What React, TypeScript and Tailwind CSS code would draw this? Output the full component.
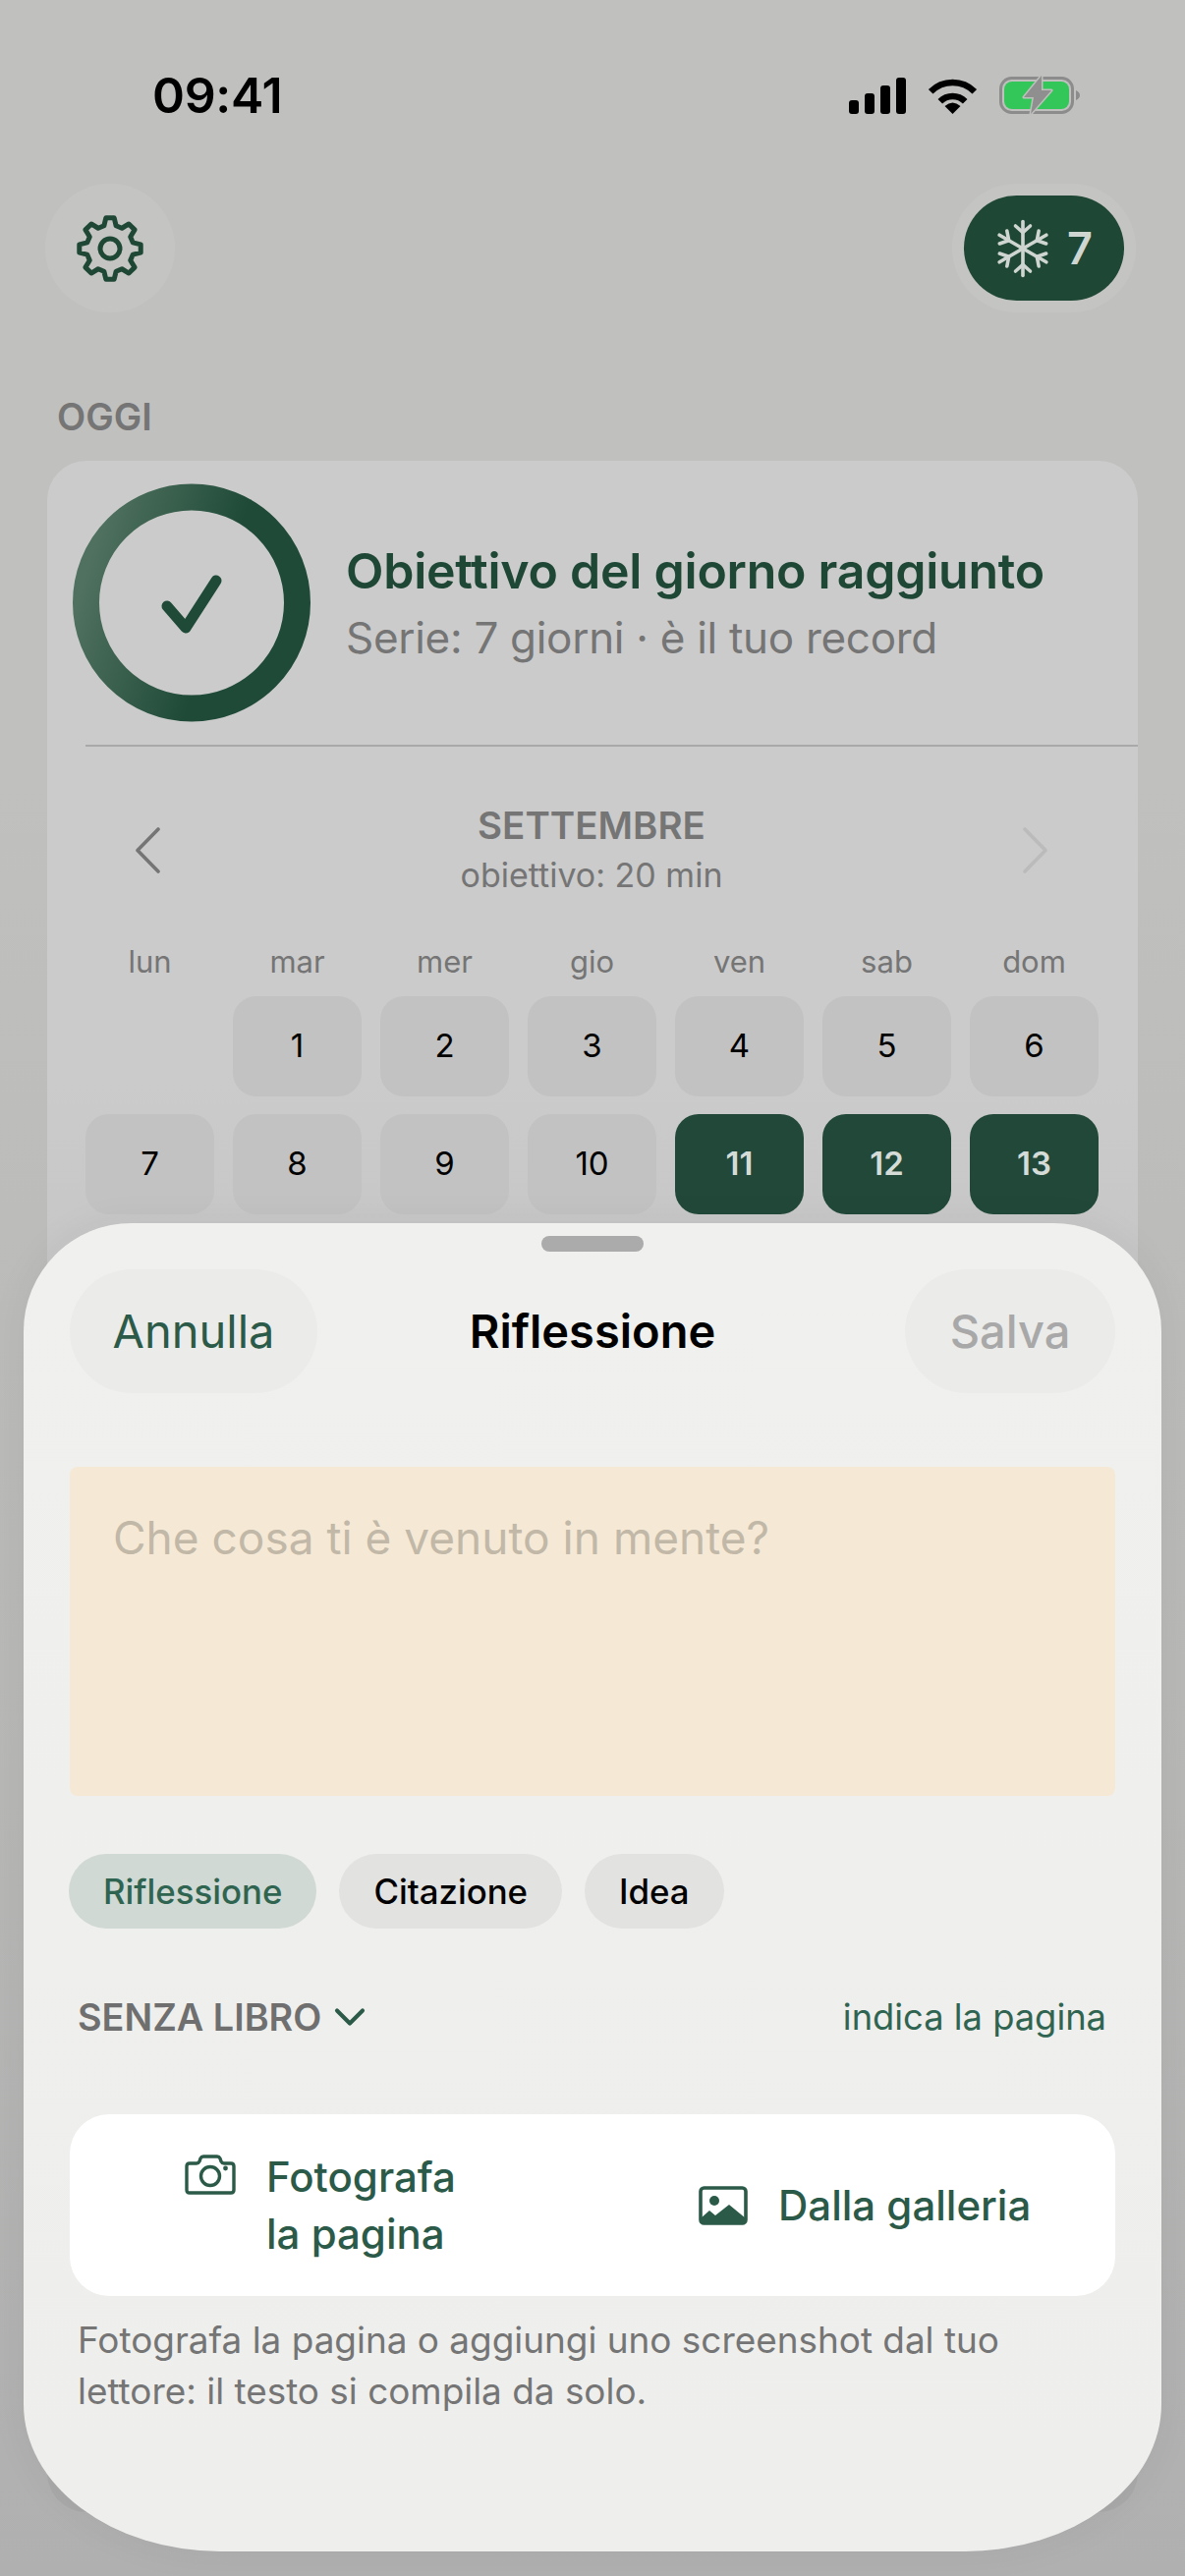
import { ChevronDown } from 'lucide-react';

const WEEKDAYS = ['lun', 'mar', 'mer', 'gio', 'ven', 'sab', 'dom'];
const DAYS: (number | null)[] = [null, 1, 2, 3, 4, 5, 6, 7, 8, 9, 10, 11, 12, 13];
const DONE_FROM = 11;

// 8 toothed gear outline, worked out once so the teeth stay even
function gearPath() {
  const pts: string[] = [];
  const teeth = 8;
  for (let i = 0; i < teeth; i++) {
    const a = (i / teeth) * Math.PI * 2 - Math.PI / 2;
    const step = (Math.PI * 2) / teeth;
    const p = (r: number, t: number) =>
      `${(r * Math.cos(a + t * step)).toFixed(2)} ${(r * Math.sin(a + t * step)).toFixed(2)}`;
    pts.push(`${i === 0 ? 'M' : 'L'}${p(24, -0.33)}`);
    pts.push(`L${p(31.5, -0.17)}`);
    pts.push(`L${p(31.5, 0.17)}`);
    pts.push(`L${p(24, 0.33)}`);
  }
  return pts.join(' ') + ' Z';
}

function GearIcon() {
  return (
    <svg width="72" height="72" viewBox="-36 -36 72 72" fill="none" stroke="#1f4735" strokeWidth="5" strokeLinejoin="round">
      <path d={gearPath()} />
      <circle cx="0" cy="0" r="10" />
    </svg>
  );
}

function SnowflakeIcon() {
  return (
    <svg width="52" height="60" viewBox="-26 -30 52 60" fill="none" stroke="#cfd6d1" strokeWidth="3.6" strokeLinecap="round">
      {[0, 60, 120, 180, 240, 300].map((r) => (
        <g key={r} transform={`rotate(${r})`}>
          <path d="M0 0V-27.5" />
          <path d="M-7.5 -23L0 -16.5L7.5 -23" />
        </g>
      ))}
    </svg>
  );
}

function SignalIcon() {
  return (
    <svg width="58" height="37" viewBox="0 0 58 37" fill="#000">
      <rect x="0" y="23" width="10" height="14" rx="3" />
      <rect x="16" y="16" width="10" height="21" rx="3" />
      <rect x="32" y="8" width="10" height="29" rx="3" />
      <rect x="48" y="0" width="10" height="37" rx="3" />
    </svg>
  );
}

function WifiIcon() {
  return (
    <svg width="51" height="37" viewBox="0 0 51 37" fill="none" stroke="#000" strokeWidth="6.5">
      <path d="M3.2 14.2A31.5 31.5 0 0 1 47.8 14.2" />
      <path d="M12.8 24.3A18 18 0 0 1 38.2 24.3" />
      <path d="M25.5 37L17.5 29Q25.5 22 33.5 29Z" fill="#000" stroke="none" />
    </svg>
  );
}

function BatteryIcon() {
  return (
    <svg width="84" height="40" viewBox="0 0 84 40" fill="none">
      <rect x="1.5" y="2.5" width="73" height="35" rx="11" stroke="#8c8c8c" strokeWidth="3" />
      <rect x="5" y="6" width="66" height="28" rx="8" fill="#33c75a" />
      <path d="M78 15Q82 17 82 20Q82 23 78 25Z" fill="#8c8c8c" />
      <path
        d="M43 0L25 22H35L32 39L53 15H43Z"
        fill="#8f8f8f"
        stroke="#bfbfbd"
        strokeWidth="3"
        paintOrder="stroke"
        strokeLinejoin="round"
      />
    </svg>
  );
}

function GoalRing() {
  return (
    <svg width="242" height="243" viewBox="0 0 242 243" fill="none" className="shrink-0">
      <defs>
        <linearGradient id="ring" x1="0" y1="0.35" x2="1" y2="0.65">
          <stop offset="0" stopColor="#50715f" />
          <stop offset="0.62" stopColor="#1f4a38" />
        </linearGradient>
      </defs>
      <circle cx="121" cy="121.5" r="107.5" stroke="url(#ring)" strokeWidth="27" />
      <path d="M96 125L115 147L146 99" stroke="#1f4a38" strokeWidth="11" strokeLinecap="round" strokeLinejoin="round" />
    </svg>
  );
}

function ThinChevron({ left, className }: { left?: boolean; className: string }) {
  return (
    <svg width="29" height="47" viewBox="0 0 29 47" fill="none" stroke="currentColor" strokeWidth="3.6" strokeLinecap="round" strokeLinejoin="round" className={className}>
      <path d={left ? 'M25 2L4 23.5L25 45' : 'M4 2L25 23.5L4 45'} />
    </svg>
  );
}

function CameraIcon() {
  return (
    <svg width="52" height="41" viewBox="0 0 52 41" fill="none" stroke="#2b5a48" strokeWidth="3.4" strokeLinejoin="round">
      <path d="M5 9H12Q14 9 15 7L16 4Q17 2 19 2H33Q35 2 36 4L37 7Q38 9 40 9H47Q50 9 50 12V36Q50 39 47 39H5Q2 39 2 36V12Q2 9 5 9Z" />
      <circle cx="26" cy="22" r="9.5" />
      <circle cx="41.5" cy="14" r="2.4" fill="#2b5a48" stroke="none" />
    </svg>
  );
}

function GalleryIcon() {
  return (
    <svg width="50" height="40" viewBox="0 0 50 40" fill="none" stroke="#2b5a48" strokeWidth="3.6" strokeLinejoin="round">
      <rect x="2" y="2" width="46" height="36" rx="3.5" />
      <circle cx="16" cy="15" r="5" fill="#2b5a48" stroke="none" />
      <path d="M2 33L11 25L17 30L31 19L48 33V36Q48 38 46 38H4Q2 38 2 36Z" fill="#2b5a48" stroke="none" />
    </svg>
  );
}

export default function App() {
  return (
    <div className="relative w-[1206px] h-[2622px] overflow-hidden bg-gradient-to-b from-[#c0c0be] from-30% to-[#b0b0b0] font-['Inter',sans-serif]">
      {/* status bar */}
      <div className="flex items-center justify-between h-[187px] pl-[155px] pr-[105px] pt-[7px]">
        <span className="text-[50px] font-semibold text-black tracking-[-0.3px]">09:41</span>
        <div className="flex items-center gap-[22px]">
          <SignalIcon />
          <WifiIcon />
          <BatteryIcon />
        </div>
      </div>

      {/* header buttons */}
      <div className="flex items-center justify-between pl-[46px] pr-[50px]">
        <div className="flex items-center justify-center w-[132px] h-[131px] rounded-full bg-[#c4c4c2]">
          <GearIcon />
        </div>
        <div className="p-[12px] rounded-full bg-[#c4c4c2]">
          <div className="flex items-center justify-center gap-[19px] w-[163px] h-[107px] rounded-full bg-[#1f4735] pl-[2px]">
            <SnowflakeIcon />
            <span className="text-[45px] font-semibold leading-none text-[#cfd6d1]">7</span>
          </div>
        </div>
      </div>

      <p className="mt-[83px] ml-[58px] text-[38px] leading-[46px] font-semibold text-[#757575]">OGGI</p>

      {/* today card, runs on under the sheet */}
      <div className="mt-[22px] mx-[48px] h-[2088px] rounded-[40px] bg-gradient-to-b from-[#cbcbcb] from-30% to-[#a9a9a9]">
        <div className="flex items-center gap-[36px] pt-[23px] pl-[26px]">
          <GoalRing />
          <div>
            <p className="text-[50px] leading-[62px] font-semibold text-[#1f4735] whitespace-nowrap tracking-[-0.25px]">Obiettivo del giorno raggiunto</p>
            <p className="mt-[8px] text-[44px] leading-[58px] text-[#757575] whitespace-nowrap tracking-[-0.3px]">Serie: 7 giorni · è il tuo record</p>
          </div>
        </div>
        <div className="mt-[23px] ml-[39px] h-[2px] bg-[#a9a9a9]" />

        <div className="flex items-center justify-between mt-[57px] pl-[88px] pr-[90px]">
          <ThinChevron left className="text-[#757575] mt-[-2px]" />
          <div className="flex flex-col items-center">
            <p className="text-[38.5px] leading-[46px] font-semibold text-[#757575]">SETTEMBRE</p>
            <p className="mt-[4px] text-[34px] leading-[48px] text-[#757575]">obiettivo: 20 min</p>
          </div>
          <ThinChevron className="text-[#bbbbbb] mt-[-2px]" />
        </div>

        <div className="grid grid-cols-7 gap-x-[19px] mt-[44px] pl-[39px] pr-[40px]">
          {WEEKDAYS.map((d) => (
            <span key={d} className="text-center text-[31px] leading-[40px] text-[#757575]">{d}</span>
          ))}
        </div>

        <div className="grid grid-cols-7 gap-x-[19px] gap-y-[18px] mt-[15px] pl-[39px] pr-[40px]">
          {DAYS.map((d, i) =>
            d === null ? (
              <div key={i} />
            ) : (
              <div
                key={i}
                className={
                  d >= DONE_FROM
                    ? 'flex items-center justify-center h-[102px] rounded-[24px] bg-[#214838] text-[33px] font-semibold text-[#d5dcd8]'
                    : 'flex items-center justify-center h-[102px] rounded-[24px] bg-[#c2c2c2] text-[33px] text-black'
                }
              >
                {d}
              </div>
            ),
          )}
        </div>
      </div>

      {/* sheet */}
      <div className="absolute left-[24px] top-[1245px] w-[1158px] h-[1352px] bg-gradient-to-b from-[#f0f0ee] to-[#eeeeed] rounded-t-[110px] rounded-bl-[200px_150px] rounded-br-[200px_150px] shadow-[0_0_40px_rgba(0,0,0,0.05)]">
        <div className="mx-auto mt-[13px] w-[104px] h-[16px] rounded-[8px] bg-[#ababab]" />

        <div className="flex items-center mt-[18px] px-[47px]">
          <div className="flex-1">
            <div className="flex items-center justify-center w-[252px] h-[126px] rounded-full bg-[#ebebea] text-[47px] text-[#2b5a48]">Annulla</div>
          </div>
          <p className="text-[47px] font-semibold text-black">Riflessione</p>
          <div className="flex flex-1 justify-end">
            <div className="flex items-center justify-center w-[214px] h-[126px] rounded-full bg-[#ebebea] text-[47px] font-medium text-[#a8a8a8]">Salva</div>
          </div>
        </div>

        <div className="mt-[75px] mx-[47px] h-[335px] rounded-[8px] bg-[#f5e9d6] pl-[44px] pt-[44px]">
          <p className="text-[46px] leading-[56px] text-[#c2b8a8]">Che cosa ti è venuto in mente?</p>
        </div>

        <div className="flex items-center gap-[23px] mt-[59px] ml-[46px]">
          <span className="flex items-center h-[76px] px-[35px] rounded-full bg-[#d0d9d4] text-[34.8px] font-medium text-[#2f6450]">Riflessione</span>
          <span className="flex items-center h-[76px] px-[35px] rounded-full bg-[#e2e2e1] text-[34.8px] font-medium text-black">Citazione</span>
          <span className="flex items-center h-[76px] px-[35px] rounded-full bg-[#e2e2e1] text-[34.8px] font-medium text-black">Idea</span>
        </div>

        <div className="flex items-center justify-between mt-[67px] pl-[55px] pr-[56px]">
          <div className="flex items-center gap-[3px] h-[46px]">
            <span className="text-[37.8px] leading-[46px] font-semibold text-[#6f6f6f]">SENZA LIBRO</span>
            <ChevronDown size={52} strokeWidth={1.9} className="text-[#2b5a48]" />
          </div>
          <span className="text-[36.3px] leading-[46px] text-[#2f6450]">indica la pagina</span>
        </div>

        <div className="flex items-center mt-[76px] mx-[47px] h-[185px] rounded-[40px] bg-white text-[42px] font-medium leading-[58px] text-[#2b5a48]">
          <div className="flex items-start gap-[31px] ml-[117px] w-[523px]">
            <div className="mt-[6px]"><CameraIcon /></div>
            <p>Fotografa<br />la pagina</p>
          </div>
          <div className="flex items-center gap-[31px]">
            <GalleryIcon />
            <p>Dalla galleria</p>
          </div>
        </div>

        <p className="mt-[19px] ml-[55px] text-[36.9px] leading-[52px] text-[#757575]">
          Fotografa la pagina o aggiungi uno screenshot dal tuo
          <br />
          lettore: il testo si compila da solo.
        </p>
      </div>
    </div>
  );
}
